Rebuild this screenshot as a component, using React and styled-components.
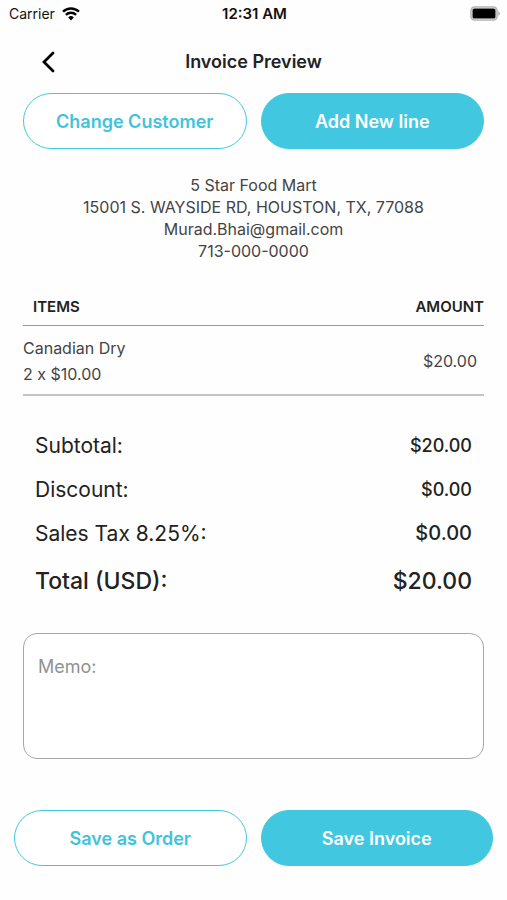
import React from "react";
import styled, { createGlobalStyle } from "styled-components";

const GlobalStyle = createGlobalStyle`
  *, *::before, *::after { box-sizing: border-box; }
  body {
    margin: 0;
    background: #fefefe;
    color: #222;
    font-family: Inter, "Liberation Sans", sans-serif;
  }
`;

const Screen = styled.div`
  display: flex;
  flex-direction: column;
  min-height: 100vh;
`;

const StatusBar = styled.div`
  display: grid;
  grid-template-columns: 1fr auto 1fr;
  align-items: center;
  height: 27px;
  padding: 0 7px 0 9px;
  font-size: 14px;
  color: #111;
`;

const Carrier = styled.span`
  display: flex;
  align-items: center;
  gap: 7px;
`;

const Clock = styled.time`
  font-size: 15px;
  font-weight: 600;
`;

const BatteryIcon = styled.svg`
  justify-self: end;
`;

const Header = styled.header`
  display: grid;
  grid-template-columns: 48px 1fr 48px;
  align-items: center;
  height: 66px;
  padding: 3px 24px 0;
`;

const BackButton = styled.button`
  display: flex;
  align-items: center;
  justify-content: center;
  height: 44px;
  padding: 0;
  border: 0;
  background: none;
  color: #000;
`;

const Title = styled.h1`
  margin: 0;
  font-size: 18px;
  line-height: 24px;
  font-weight: 600;
  text-align: center;
`;

const Main = styled.main`
  padding: 0 23px;
`;

const ButtonRow = styled.div`
  display: grid;
  grid-template-columns: 1fr 1fr;
  gap: 14px;
`;

const Footer = styled.footer`
  padding: 51px 14px 33px;
`;

const PillButton = styled.button`
  height: 56px;
  padding: 0 16px;
  border: 1px solid #41c8e0;
  border-radius: 28px;
  background: ${(p) => (p.$filled ? "#41c8e0" : "#fff")};
  color: ${(p) => (p.$filled ? "#fff" : "#41c3dc")};
  font-family: inherit;
  font-size: 18px;
  font-weight: 600;
`;

const Customer = styled.address`
  margin: 25px 0 26px;
  font-size: 16px;
  line-height: 22px;
  font-style: normal;
  text-align: center;
  color: #444;
`;

const ItemTable = styled.table`
  width: 100%;
  border-collapse: separate;
  border-spacing: 0;
`;

const HeadCell = styled.th`
  height: 38px;
  padding: 0 0 0 ${(p) => (p.$end ? "0" : "10px")};
  border-bottom: 1px solid #999;
  font-size: 15px;
  font-weight: 600;
  text-align: ${(p) => (p.$end ? "right" : "left")};
`;

const ItemCell = styled.td`
  padding: 9px ${(p) => (p.$end ? "7px" : "0")} 7px 0;
  border-bottom: 2px solid #c4c4c4;
  font-size: 16px;
  line-height: 26px;
  text-align: ${(p) => (p.$end ? "right" : "left")};
  color: #444;
`;

const Totals = styled.dl`
  margin: 27px 12px 26px;
`;

const TotalLine = styled.div`
  display: flex;
  align-items: center;
  justify-content: space-between;
  height: ${(p) => (p.$grand ? "52px" : "44px")};
  font-size: ${(p) => (p.$grand ? "23px" : "21px")};
  font-weight: ${(p) => (p.$grand ? 500 : 400)};
`;

const TotalValue = styled.dd`
  margin: 0;
  font-size: ${(p) => p.$size};
  font-weight: 500;
`;

const Memo = styled.textarea`
  display: block;
  width: 100%;
  height: 126px;
  padding: 21px 14px;
  border: 1px solid #a8a8a8;
  border-radius: 14px;
  background: #fff;
  color: #222;
  font-family: inherit;
  font-size: 18px;
  line-height: 24px;
  resize: none;

  &::placeholder {
    color: #929292;
    opacity: 1;
  }
`;

const totals = [
  { label: "Subtotal:", value: "$20.00", size: "18px" },
  { label: "Discount:", value: "$0.00", size: "18px" },
  { label: "Sales Tax 8.25%:", value: "$0.00", size: "20px" },
  { label: "Total (USD):", value: "$20.00", size: "23px", grand: true },
];

function WifiIcon() {
  return (
    <svg width="18" height="14" viewBox="0 0 18 14" fill="none" aria-hidden="true">
      <path d="M1 4.7a11.6 11.6 0 0 1 16 0" stroke="#000" strokeWidth="2.4" />
      <path d="M3.9 7.8a7.4 7.4 0 0 1 10.2 0" stroke="#000" strokeWidth="2.3" />
      <path d="M6.2 10.4a4.1 4.1 0 0 1 5.6 0L9 13.4z" fill="#000" />
    </svg>
  );
}

function Battery() {
  return (
    <BatteryIcon width="30" height="15" viewBox="0 0 30 15" aria-label="Battery full" role="img">
      <rect x="1" y="1" width="26" height="13" rx="3.5" fill="#fff" stroke="#b4b4b4" strokeWidth="1.6" />
      <rect x="2.5" y="2.5" width="23" height="10" rx="1.5" fill="#000" />
      <path d="M28.300 5.200v4.600c.9-.4 1.500-1.200 1.500-2.300s-.6-1.900-1.500-2.300z" fill="#aaa" />
    </BatteryIcon>
  );
}

export default function App() {
  return (
    <Screen>
      <GlobalStyle />
      <StatusBar>
        <Carrier>
          Carrier
          <WifiIcon />
        </Carrier>
        <Clock>12:31 AM</Clock>
        <Battery />
      </StatusBar>

      <Header>
        <BackButton type="button" aria-label="Back">
          <svg width="14" height="22" viewBox="0 0 14 22" fill="none" aria-hidden="true">
            <path d="M12 2 3 11l9 9" stroke="currentColor" strokeWidth="2.8" strokeLinecap="round" strokeLinejoin="miter" />
          </svg>
        </BackButton>
        <Title>Invoice Preview</Title>
      </Header>

      <Main>
        <ButtonRow>
          <PillButton type="button">Change Customer</PillButton>
          <PillButton type="button" $filled>Add New line</PillButton>
        </ButtonRow>

        <Customer>
          <div>5 Star Food Mart</div>
          <div>15001 S. WAYSIDE RD, HOUSTON, TX, 77088</div>
          <div>Murad.Bhai@gmail.com</div>
          <div>713-000-0000</div>
        </Customer>

        <ItemTable>
          <thead>
            <tr>
              <HeadCell scope="col">ITEMS</HeadCell>
              <HeadCell scope="col" $end>AMOUNT</HeadCell>
            </tr>
          </thead>
          <tbody>
            <tr>
              <ItemCell>
                <div>Canadian Dry</div>
                <div>2 x $10.00</div>
              </ItemCell>
              <ItemCell $end>$20.00</ItemCell>
            </tr>
          </tbody>
        </ItemTable>

        <Totals>
          {totals.map((t) => (
            <TotalLine key={t.label} $grand={t.grand}>
              <dt>{t.label}</dt>
              <TotalValue $size={t.size}>{t.value}</TotalValue>
            </TotalLine>
          ))}
        </Totals>

        <Memo aria-label="Memo" placeholder="Memo:" />
      </Main>

      <Footer>
        <ButtonRow>
          <PillButton type="button">Save as Order</PillButton>
          <PillButton type="button" $filled>Save Invoice</PillButton>
        </ButtonRow>
      </Footer>
    </Screen>
  );
}
